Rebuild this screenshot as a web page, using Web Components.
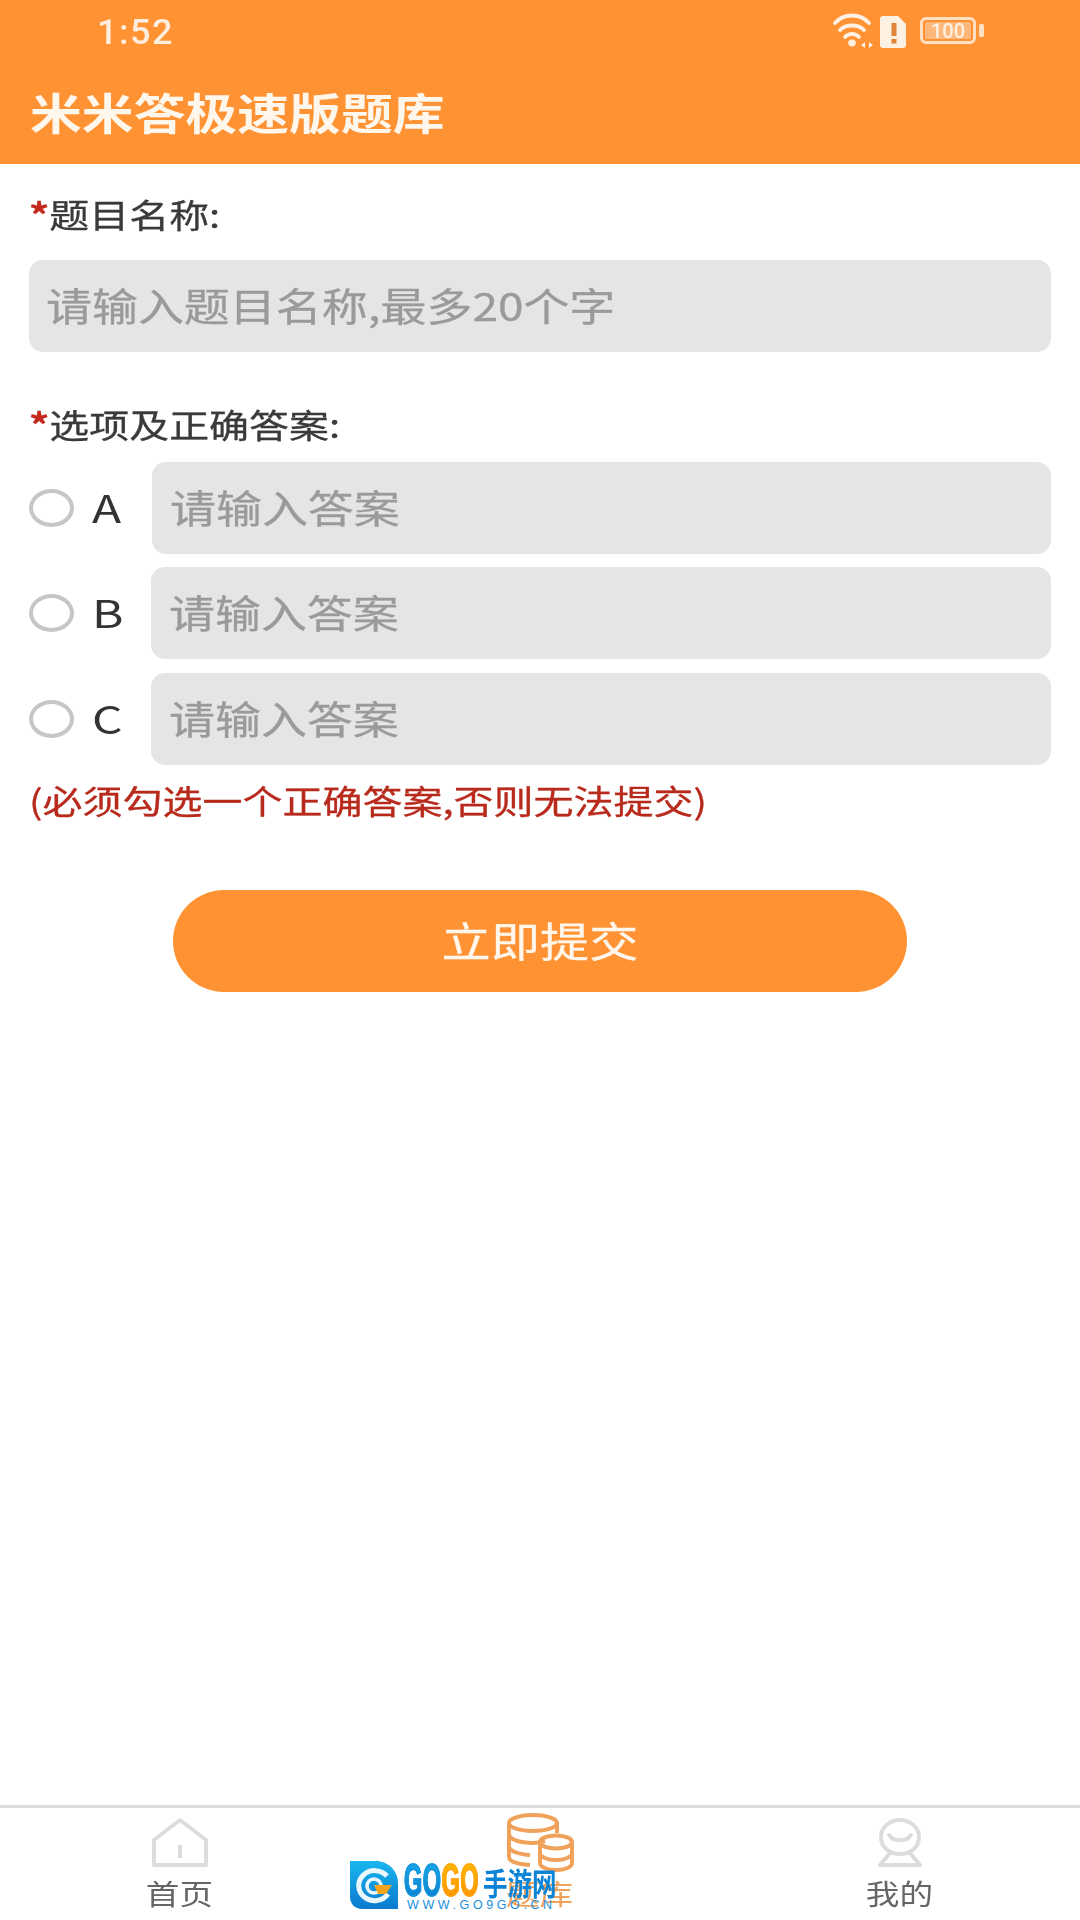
<!DOCTYPE html>
<html lang="zh-CN"><head><meta charset="utf-8"><title>米米答极速版题库</title>
<style>
html,body{margin:0;padding:0;background:#fff}
body{font-family:"Noto Sans CJK SC","Noto Sans",sans-serif;color:#333}
</style></head><body>
<quiz-app>
  <status-bar slot="status" time="1:52"></status-bar>
  <app-header slot="status">米米答极速版题库</app-header>
  <field-label>题目名称:</field-label>
  <text-box style="margin-top:14px;--pad:17px">请输入题目名称,最多20个字</text-box>
  <field-label style="margin-top:44px">选项及正确答案:</field-label>
  <answer-row style="margin-top:6px;--inset:123px" letter="A">请输入答案</answer-row>
  <answer-row style="margin-top:13px" letter="B">请输入答案</answer-row>
  <answer-row style="margin-top:14px" letter="C">请输入答案</answer-row>
  <hint-note>(必须勾选一个正确答案,否则无法提交)</hint-note>
  <submit-button>立即提交</submit-button>
  <tab-bar slot="tabs"></tab-bar>
</quiz-app>
<script>
const def=(n,html,init)=>customElements.define(n,class extends HTMLElement{constructor(){super();this.attachShadow({mode:'open'}).innerHTML=html;}connectedCallback(){init&&init(this)}});
const CJK='"Noto Sans CJK SC","Noto Sans",sans-serif';
def('quiz-app',`<style>:host{display:flex;flex-direction:column;width:1080px;height:1920px;position:relative;overflow:hidden;background:#fff}
main{flex:1;padding:22px 29px 0;display:flex;flex-direction:column}</style>
<slot name="status"></slot><main><slot></slot></main><slot name="tabs"></slot>`);

def('status-bar',`<style>:host{display:flex;align-items:center;justify-content:space-between;height:64px;background:#ff9233;color:#ffeedd;padding:0 95px 0 97px;box-sizing:border-box;filter:blur(.6px)}
.t{font:500 35px/1 Roboto,sans-serif;letter-spacing:1.5px;display:block;transform:scaleX(1.03);transform-origin:left;margin-top:1px}
svg{display:block}</style>
<span class="t" id="t"></span>
<svg width="153" height="40" viewBox="0 0 153 40" fill="none">
 <g stroke="#fff1e2" stroke-width="3.800" stroke-linecap="round" fill="none">
  <path d="M3 11C12 1 28 1 37 11"/><path d="M8 18C14 12 26 12 32 18"/><path d="M13 25C17 21 23 21 27 25"/></g>
 <ellipse cx="20" cy="31" rx="3.800" ry="3.400" fill="#fff1e2"/>
 <path d="M29 33l4-3v6zM37 30l4 3-4 3z" fill="#fff1e2"/>
 <path d="M48 7a3 3 0 0 1 3-3h15l8 8v21a3 3 0 0 1-3 3H51a3 3 0 0 1-3-3z" fill="#fff1e2"/>
 <rect x="59.500" y="11" width="5" height="13" fill="#e0853a"/><rect x="59.500" y="27" width="5" height="4.500" fill="#e0853a"/>
 <rect x="89.500" y="6.500" width="53" height="24" rx="4.500" stroke="#ffe0c2" stroke-width="3"/>
 <rect x="93" y="10" width="46" height="17" rx="1.500" fill="#ffb87c"/>
 <text x="116" y="25.500" text-anchor="middle" font-family="Roboto,sans-serif" font-weight="500" font-size="20" fill="#fff1e2">100</text>
 <rect x="147" y="12" width="5" height="13" rx="1.500" fill="#ffe0c2"/>
</svg>`,el=>{el.shadowRoot.getElementById('t').textContent=el.getAttribute('time')});

def('app-header',`<style>:host{display:block;height:100px;background:#ff9233;color:#fff6ec;padding-left:30px;box-sizing:border-box}
span{display:block;font:700 43px/1 ${CJK};transform:scaleX(1.205);transform-origin:left;padding-top:26px;white-space:nowrap}</style><span><slot></slot></span>`);

def('field-label',`<style>:host{display:block;height:60px;color:#3a3a3a}
span{display:block;font:400 33.300px/56px ${CJK};-webkit-text-stroke:.3px currentColor;transform:scaleX(1.2);transform-origin:left;white-space:nowrap}
b{color:#c4281c;font-weight:700}</style><span><b>*</b><slot></slot></span>`);

def('text-box',`<style>:host{display:block;height:92px;border-radius:14px;background:#e5e5e5;color:#9a9a9a;box-sizing:border-box;padding-left:var(--pad,19px);overflow:hidden}
span{display:block;font:400 38.300px/90px ${CJK};-webkit-text-stroke:.3px currentColor;transform:scaleX(1.2);transform-origin:left;white-space:nowrap}</style><span><slot></slot></span>`);

def('answer-row',`<style>:host{display:grid;grid-template-columns:var(--inset,122px) 1fr;align-items:center;height:92px}
.c{display:flex;align-items:center}
.r{width:45px;height:38px;border:4px solid #c6c6c6;border-radius:50%;box-sizing:border-box}
.l{font:400 38px/1 ${CJK};color:#333;transform:scaleX(1.26);transform-origin:left;margin:-3px 0 0 18px}</style>
<div class="c"><div class="r"></div><span class="l" id="l"></span></div><text-box style="--pad:var(--ipad,18px)"><slot></slot></text-box>`,el=>{el.shadowRoot.getElementById('l').textContent=el.getAttribute('letter')});

def('hint-note',`<style>:host{display:block;height:60px;margin-top:7px;color:#b82a1c}
span{display:block;font:400 33.350px/56px ${CJK};-webkit-text-stroke:.3px currentColor;transform:scaleX(1.2);transform-origin:left;white-space:nowrap}</style><span><slot></slot></span>`);

def('submit-button',`<style>:host{display:flex;align-items:center;justify-content:center;width:734px;height:102px;margin:58px auto 0;border-radius:51px/51px;background:#ff9233;color:#fff6ec}
span{font:400 41px/1 ${CJK};-webkit-text-stroke:.3px currentColor;transform:scaleX(1.2);white-space:nowrap;margin-top:-3px}</style><span><slot></slot></span>`);

const ICONS={
home:`<svg width="60" height="52" viewBox="0 0 60 52" fill="none" stroke="#dcdcdc" stroke-width="4"><path d="M30 3L56 23V48H4V23Z" stroke-linejoin="round"/><path d="M30 28V41" stroke-width="4"/></svg>`,
db:`<svg width="68" height="60" viewBox="0 0 68 60" fill="none" stroke="#f0a25a" stroke-width="4"><ellipse cx="27" cy="10" rx="24" ry="8"/><path d="M3 10V44C3 48 10 51 24 52M51 10V20M3 21C3 26 13 30 27 30C32 30 36 29 39 28M3 33C3 38 12 41 24 42"/><ellipse cx="50" cy="29" rx="16" ry="6.500"/><path d="M34 29V50C34 54 41 57 50 57C59 57 66 54 66 50V29M34 40C34 44 41 47 50 47C59 47 66 44 66 40"/></svg>`,
me:`<svg width="54" height="52" viewBox="0 0 54 52" fill="none" stroke="#dcdcdc" stroke-width="4"><path d="M27 3C38 3 46 11 46 20C46 30 38 37 27 37C16 37 8 30 8 20C8 11 16 3 27 3Z"/><path d="M17 36L7 48H47L37 36" stroke-linejoin="round"/><path d="M16 18C20 25 34 25 38 18" stroke-linecap="round"/></svg>`};
def('tab-item',`<style>:host{display:flex;flex-direction:column;align-items:center;width:360px}
.i{height:60px;display:flex;align-items:flex-start;justify-content:center}svg{display:block}
span{display:block;font:400 28.500px/1 ${CJK};color:var(--c,#666);transform:scaleX(1.18);white-space:nowrap;margin-top:2px}</style>
<div class="i" id="i"></div><span><slot></slot></span>`,el=>{const n=el.getAttribute('icon');const i=el.shadowRoot.getElementById('i');i.innerHTML=ICONS[n];i.style.marginTop=el.getAttribute('mt')||'0';i.style.height=el.getAttribute('h')||'60px'});

def('tab-bar',`<style>:host{display:block;position:relative;height:115px;box-sizing:border-box;border-top:3px solid #dcdcdc}
.row{display:flex;padding-top:9px;filter:blur(.6px)}</style>
<div class="row"><tab-item icon="home">首页</tab-item><tab-item icon="db" mt="-4px" h="64px" style="--c:#f0a25a">题库</tab-item><tab-item icon="me">我的</tab-item></div><water-mark></water-mark>`);

def('water-mark',`<style>:host{position:absolute;left:350px;top:53px;width:210px;height:50px;display:block}
svg{position:absolute;left:0;top:0}
.g{position:absolute;left:54px;top:-2px;font:700 47px/42px "Liberation Sans",sans-serif;white-space:nowrap;transform:scaleX(.5);transform-origin:left;letter-spacing:1px}
.g i{font-style:normal;background:linear-gradient(#1cb0ee,#0b78c8);-webkit-background-clip:text;background-clip:text;color:transparent;-webkit-text-stroke:1.500px #1296e0}
.g u{text-decoration:none;background:linear-gradient(#ffc400,#ff8a00);-webkit-background-clip:text;background-clip:text;color:transparent;-webkit-text-stroke:1.500px #ffa30a}
.h{position:absolute;left:133px;top:3px;font:700 24.500px/30px ${CJK};white-space:nowrap;color:#0b84d8;transform:scaleY(1.25);transform-origin:top}
.w{position:absolute;left:57px;top:38px;font:400 12.500px/12px "Liberation Sans",sans-serif;letter-spacing:3.600px;color:#1a8fdc;white-space:nowrap}</style>
<svg width="48" height="48" viewBox="0 0 48 48"><defs><linearGradient id="lg" x1="0" y1="0" x2="0" y2="1"><stop offset="0" stop-color="#19b6ee"/><stop offset="1" stop-color="#0a7ad0"/></linearGradient></defs>
<path d="M0 0H26C38 0 48 10 48 22V48H12C5 48 0 43 0 36Z" fill="url(#lg)"/>
<path d="M37 15A16 15 0 1 0 38 33" fill="none" stroke="#eaf7fd" stroke-width="5"/><circle cx="24" cy="25" r="7" fill="none" stroke="#eaf7fd" stroke-width="3.500"/>
<path d="M24 24H42L36 33H28Z" fill="#f5a51c"/></svg>
<div class="g"><i>GO</i><u>GO</u></div><div class="h">手游网</div><div class="w">WWW.GO9GO.CN</div>`);
</script>
</body></html>
